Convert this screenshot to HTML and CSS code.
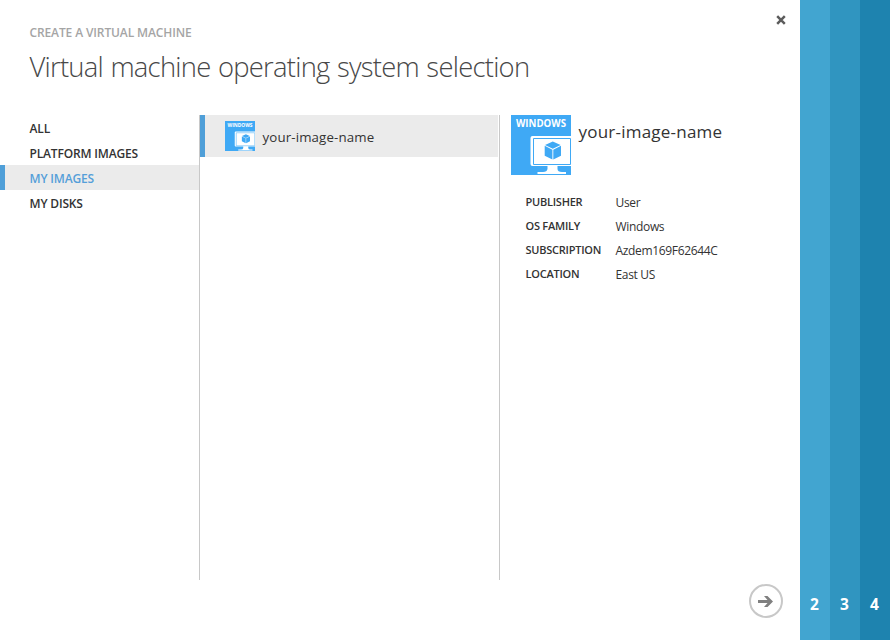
FILE: index.html
```html
<!DOCTYPE html>
<html lang="en">
<head>
<meta charset="utf-8">
<title>Create a virtual machine</title>
<link rel="stylesheet" href="styles.css">
</head>
<body>
<div class="wizard">
  <main class="page">
    <button class="close" aria-label="Close"><svg width="10" height="10" viewBox="0 0 10 10"><path d="M1.2 1.2 8.8 8.8M8.8 1.2 1.2 8.8" stroke="#5c5c5c" stroke-width="2.5"/></svg></button>
    <header>
      <div class="eyebrow">CREATE A VIRTUAL MACHINE</div>
      <h1>Virtual machine operating system selection</h1>
    </header>
    <div class="columns">
      <nav class="filters">
        <a>ALL</a>
        <a>PLATFORM IMAGES</a>
        <a class="selected">MY IMAGES</a>
        <a>MY DISKS</a>
      </nav>
      <section class="list">
        <div class="item">
          <svg class="thumb" width="30" height="30" viewBox="0 0 60 60"><use href="#vm"/></svg>
          <span class="item-name">your-image-name</span>
        </div>
      </section>
      <section class="details">
        <div class="summary">
          <svg class="logo" width="60" height="60" viewBox="0 0 60 60">
            <g id="vm">
              <rect width="60" height="60" fill="#3fa9f5"/>
              <text class="logo-text" x="5" y="12" textLength="50" lengthAdjust="spacingAndGlyphs">WINDOWS</text>
              <path d="M60 21H21.5Q19.5 21 19.5 23V49Q19.5 51 21.5 51H36.5V54Q36 57 32 57H26.5V59H55V57H51Q46.5 57 46.5 54V51H60Z" fill="#fff"/>
              <path d="M22.5 23.5H59.5V49.5H22.5Z" fill="none" stroke="#3fa9f5"/>
              <path d="M41.8 26.5 49.6 29.9 41.8 33.8 34 29.9ZM33.7 30.8 41.4 34.7V44.6L33.7 40.7ZM50 30.8 42.3 34.7V44.6L50 40.7Z" fill="#3fa9f5"/>
            </g>
          </svg>
          <h2>your-image-name</h2>
        </div>
        <dl>
          <dt>PUBLISHER</dt><dd>User</dd>
          <dt>OS FAMILY</dt><dd>Windows</dd>
          <dt>SUBSCRIPTION</dt><dd>Azdem169F62644C</dd>
          <dt>LOCATION</dt><dd>East US</dd>
        </dl>
      </section>
    </div>
    <button class="next" aria-label="Next"><svg width="34" height="34" viewBox="0 0 34 34"><circle cx="17" cy="17" r="16" fill="#fff" stroke="#c8c8c8" stroke-width="2"/><path d="M9 16H18.5L15 12H18.5L24 17.5 18.5 23H15L18.5 19H9Z" fill="#808080"/></svg></button>
  </main>
  <div class="step s2">2</div>
  <div class="step s3">3</div>
  <div class="step s4">4</div>
</div>
</body>
</html>
```
FILE: styles.css
```css
* { box-sizing: border-box; }
body { margin: 0; background: #fff; color: #333; font-family: "Open Sans", "Noto Sans", sans-serif; }
button { border: 0; padding: 0; background: none; }
svg { display: block; }
.wizard { display: flex; width: 890px; height: 640px; overflow: hidden; }
.page { position: relative; width: 800px; }
.close { position: absolute; left: 776px; top: 15px; }
.next { position: absolute; left: 749px; top: 584px; }
header { height: 115px; padding: 23px 0 0 29.5px; white-space: nowrap; }
.eyebrow { font-size: 12px; line-height: 20px; font-weight: 600; color: #a5a5a5; letter-spacing: -.12px; }
h1 { margin: 4px 0 0; font-size: 27.4px; line-height: 40px; font-weight: 300; color: #484848; letter-spacing: -.74px; word-spacing: 1px; }
.columns { display: flex; height: 465px; }
.filters { width: 200px; border-right: 1px solid #c8c8c8; }
.filters a { display: block; height: 25px; padding-left: 29.5px; font-size: 12px; line-height: 28px; font-weight: 600; letter-spacing: -.16px; }
.filters .selected { padding-left: 24.5px; border-left: 5px solid #4f9fd8; background: #ebebeb; color: #559fd9; }
.list { width: 300px; padding-right: 1px; border-right: 1px solid #c8c8c8; }
.item { display: flex; align-items: center; height: 42px; border-left: 5px solid #4f9fd8; background: #ebebeb; padding-left: 20px; }
.item-name { margin-left: 7.5px; padding-top: 2px; font-size: 13.3px; line-height: 20px; letter-spacing: .13px; }
.details { padding-left: 11px; }
.summary { display: flex; height: 75px; }
.logo-text { font-size: 10px; font-weight: 700; fill: #fff; }
h2 { margin: 4px 0 0 7.5px; font-size: 17px; line-height: 26px; font-weight: 400; letter-spacing: .22px; }
dl { display: grid; grid-template-columns: 90px auto; grid-auto-rows: 24px; margin: 0 0 0 14.5px; white-space: nowrap; }
dt { font-size: 11px; line-height: 24px; font-weight: 600; letter-spacing: -.24px; }
dd { margin: 0; font-size: 12px; line-height: 26px; letter-spacing: -.33px; }
.step { width: 30px; padding: 594px 1px 0 0; text-align: center; color: #fff; font-size: 15.5px; line-height: 20px; font-weight: 700; }
.s2 { background: #42a5d0; }
.s3 { background: #3095c0; }
.s4 { background: #1e83af; }
```
